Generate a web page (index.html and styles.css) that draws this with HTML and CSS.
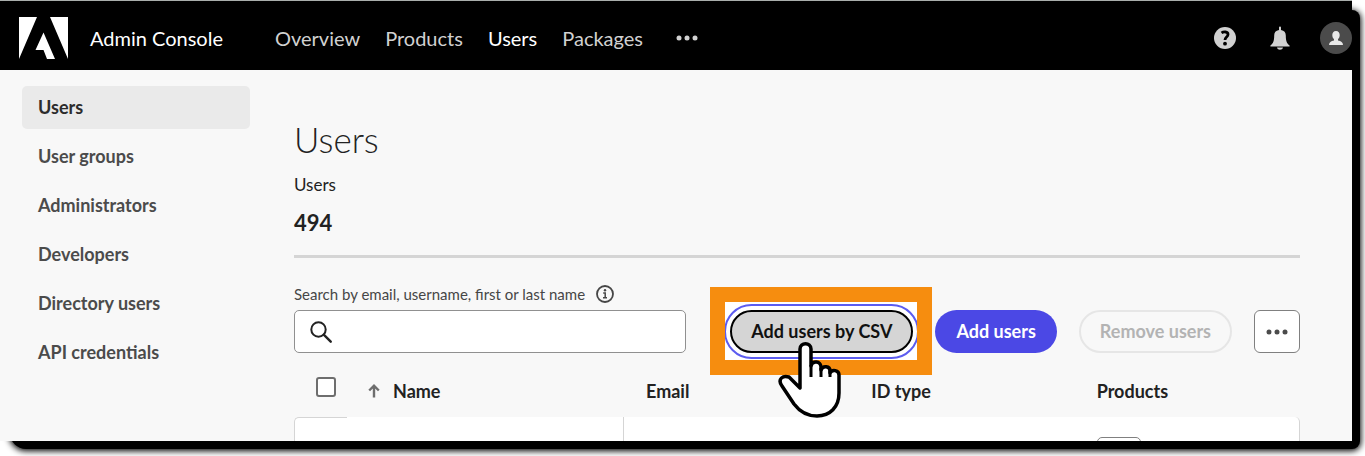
FILE: index.html
```html
<!DOCTYPE html>
<html lang="en">
  <head>
    <meta charset="UTF-8" />
    <meta name="viewport" content="width=device-width, initial-scale=1.0" />
    <title>Admin Console</title>
    <link rel="stylesheet" href="styles.css">
  </head>
  <body>
    <div class="window">
      <div class="app">
        <header class="topbar">
          <svg class="logo" viewBox="0 0 49 42" aria-hidden="true">
            <path d="M0 0h18L0 42zM31 0h18v42zM24.500 15.500L36 42h-8l-3.500-9h-8z" fill="#fff"/>
          </svg>
          <span class="brand">Admin Console</span>
          <nav class="mainnav">
            <a href="#">Overview</a>
            <a href="#">Products</a>
            <a href="#" class="current">Users</a>
            <a href="#">Packages</a>
            <button class="nav-more" aria-label="More">
              <svg width="22" height="6" viewBox="0 0 22 6"><g fill="currentColor"><circle cx="3" cy="3" r="2.500"/><circle cx="11" cy="3" r="2.500"/><circle cx="19" cy="3" r="2.500"/></g></svg>
            </button>
          </nav>
          <div class="tools">
            <button aria-label="Help">
              <svg width="22" height="22" viewBox="0 0 22 22">
                <circle cx="11" cy="11" r="11" fill="#d1d1d1"/>
                <path d="M7.500 5.900C9.500 4.600 14 4.300 14 7.500c0 2.500-3 2.700-3 5.500" fill="none" stroke="#000" stroke-width="2.800"/>
                <circle cx="11" cy="16.700" r="1.900" fill="#000"/>
              </svg>
            </button>
            <button aria-label="Notifications">
              <svg width="20" height="24" viewBox="0 0 20 24">
                <path d="M9 1.500a1 1 0 0 1 2 0V4c3.300.4 4.800 2.700 4.800 5.500 0 5.500 1 8 3.800 10v1H.400v-1c2.800-2 3.800-4.500 3.800-10C4.200 6.700 5.700 4.400 9 4zM7 21.500h6c-.5 3-5.500 3-6 0z" fill="#d1d1d1"/>
              </svg>
            </button>
            <button aria-label="Account">
              <svg width="32" height="32" viewBox="0 0 32 32">
                <circle cx="16" cy="16" r="16" fill="#4b4b4b"/>
                <path d="M16 9c2.500 0 3.700 1.700 3.700 4 0 1.800-.6 3.200-1.700 4.200v1.200c3 .6 5 1.600 5 4.600H9c0-3 2-4 5-4.600v-1.200c-1.100-1-1.700-2.400-1.700-4.200 0-2.300 1.200-4 3.700-4z" fill="#e8e8e8"/>
              </svg>
            </button>
          </div>
        </header>

        <div class="layout">
          <nav class="sidebar">
            <a href="#" class="active">Users</a>
            <a href="#">User groups</a>
            <a href="#">Administrators</a>
            <a href="#">Developers</a>
            <a href="#">Directory users</a>
            <a href="#">API credentials</a>
          </nav>

          <main class="content">
            <h1>Users</h1>
            <div class="stat">
              <div class="stat-label">Users</div>
              <div class="stat-value">494</div>
            </div>

            <div class="toolbar">
              <div class="search">
                <div class="search-label">
                  <label for="search">Search by email, username, first or last name</label>
                  <svg width="18" height="18" viewBox="0 0 18 18">
                    <circle cx="9" cy="9" r="8" fill="none" stroke="#464646" stroke-width="1.800"/>
                    <circle cx="9" cy="5.300" r="1.200" fill="#464646"/>
                    <path d="M7.200 8h2v4.500M7 12.700h4" fill="none" stroke="#464646" stroke-width="1.500"/>
                  </svg>
                </div>
                <div class="search-box">
                  <svg width="22" height="22" viewBox="0 0 22 22"><g fill="none" stroke="#222" stroke-width="2"><circle cx="8.500" cy="8.500" r="7.200"/><path d="M13.700 13.700l7 7" stroke-width="2.400" stroke-linecap="round"/></g></svg>
                  <input type="text" id="search">
                </div>
              </div>
              <div class="actions">
                <div class="callout">
                  <button class="btn btn-csv">Add users by CSV</button>
                  <span class="frame"></span>
                  <svg class="hand" width="64" height="77" viewBox="0 0 64 77">
                    <path d="M22 47V8c0-7 11-7 11 0v17c1-6 10-5 10 1v3c2-5 9-4 9 1v2c2-4 9-3 9 2v18c0 14-9 23-22 23-10 0-17-4-23-12L4 45c-5-7 1-11 7-9z" fill="#fff" stroke="#000" stroke-width="3.500" stroke-linejoin="round"/>
                    <path d="M33 24v12M43 27v9M52 30v6" stroke="#000" stroke-width="3"/>
                  </svg>
                </div>
                <button class="btn btn-primary">Add users</button>
                <button class="btn btn-disabled" disabled>Remove users</button>
                <button class="btn-more" aria-label="More actions">
                  <svg width="22" height="6" viewBox="0 0 22 6"><g fill="currentColor"><circle cx="3" cy="3" r="2.500"/><circle cx="11" cy="3" r="2.500"/><circle cx="19" cy="3" r="2.500"/></g></svg>
                </button>
              </div>
            </div>

            <table class="users">
              <thead>
                <tr>
                  <th class="col-check"><input type="checkbox" aria-label="Select all"></th>
                  <th class="col-name">
                    <svg width="12" height="14" viewBox="0 0 12 14"><path d="M6 13.500V2M1.200 6.500L6 1.700l4.800 4.800" fill="none" stroke="#6e6e6e" stroke-width="2.400"/></svg>Name
                  </th>
                  <th>Email</th>
                  <th>ID type</th>
                  <th>Products</th>
                </tr>
              </thead>
              <tbody>
                <tr>
                  <td class="cell-check"></td>
                  <td class="cell-name"></td>
                  <td></td>
                  <td></td>
                  <td class="cell-products"><span class="product"></span></td>
                </tr>
              </tbody>
            </table>
          </main>
        </div>
      </div>
    </div>
  </body>
</html>
```
FILE: styles.css
```css
* {
  margin: 0;
  padding: 0;
  box-sizing: border-box;
}

body {
  height: 100vh;
  padding: 0 13px 15px 0;
  overflow: hidden;
  background-color: #fff;
  color: #222;
  font-family: Lato, "Open Sans", sans-serif;
  font-size: 18px;
}

button {
  font-family: inherit;
  font-size: inherit;
  cursor: pointer;
}

a {
  color: inherit;
  text-decoration: none;
}

svg {
  display: block;
  flex-shrink: 0;
}

/* window and its drop shadow */
.window {
  position: relative;
  height: 100%;
}

.window::before {
  content: "";
  position: absolute;
  inset: 10px -8px -8px 10px;
  border-radius: 8px 8px 8px 16px;
  background-color: #000;
  box-shadow: 0 1px 6px 1px #000;
}

.app {
  position: relative;
  height: 100%;
  overflow: hidden;
  background-color: #f8f8f8;
}

/* top bar */
.topbar {
  display: flex;
  align-items: center;
  height: 70px;
  padding-left: 19px;
  padding-top: 5px;
  border-top: 1px solid #a9aeac;
  background-color: #000;
  color: #d1d1d1;
}

.logo {
  width: 49px;
  height: 42px;
}

.brand {
  margin-left: 22px;
  color: #fff;
  font-size: 20px;
}

.mainnav {
  display: flex;
  align-items: center;
  gap: 25px;
  margin-left: 52px;
  font-size: 20px;
}

.mainnav .current {
  color: #fff;
}

.nav-more,
.tools button {
  border: 0;
  background: none;
  color: inherit;
}

.nav-more {
  padding: 8px;
}

.tools {
  display: flex;
  align-items: center;
  gap: 30px;
  margin-left: auto;
}

.tools button:first-child {
  margin-right: 4px;
}

/* page body */
.layout {
  display: flex;
  align-items: flex-start;
  gap: 44px;
  padding: 16px 52px 0 22px;
}

.sidebar {
  display: flex;
  flex: 0 0 228px;
  flex-direction: column;
  gap: 6px;
  color: #4b4b4b;
  font-weight: bold;
}

.sidebar a {
  padding: 0 16px;
  border-radius: 5px;
  line-height: 43px;
}

.sidebar .active {
  background-color: #eaeaea;
  color: #2c2c2c;
}

.content {
  flex: 1;
  min-width: 0;
  padding-top: 30px;
}

h1 {
  font-size: 35px;
  font-weight: 300;
  line-height: 46px;
}

.stat {
  padding: 11px 0 17px;
  border-bottom: 3px solid #d5d5d5;
}

.stat-label {
  font-size: 17px;
  line-height: 24px;
}

.stat-value {
  margin-top: 11px;
  font-size: 22px;
  font-weight: bold;
  line-height: 30px;
}

/* search and buttons */
.toolbar {
  display: flex;
  align-items: flex-end;
  justify-content: space-between;
  padding-top: 24px;
}

.search {
  flex: 0 1 392px;
}

.search-label {
  display: flex;
  align-items: center;
  gap: 11px;
  margin-bottom: 4px;
  color: #464646;
  font-size: 15px;
  line-height: 24px;
}

.search-box {
  display: flex;
  align-items: center;
  height: 43px;
  padding-left: 15px;
  border: 1px solid #909090;
  border-radius: 5px;
  background-color: #fff;
}

.search-box input {
  flex: 1;
  min-width: 0;
  height: 100%;
  padding: 0 10px;
  border: 0;
  outline: 0;
  background: none;
  font: inherit;
}

.actions {
  display: flex;
  align-items: center;
  gap: 22px;
}

.btn {
  height: 43px;
  padding: 0 19px 2px;
  border: 2px solid transparent;
  border-radius: 22px;
  font-weight: bold;
  white-space: nowrap;
}

.btn-csv {
  position: relative;
  border-color: #000;
  background-color: #d5d5d5;
  color: #111;
  outline: 2px solid #5c5cf0;
  outline-offset: 4px;
}

.btn-primary {
  background-color: #4b48e5;
  color: #fff;
}

.btn-disabled {
  border-color: #e6e6e6;
  background: none;
  color: #b3b3b3;
}

.btn-more {
  display: flex;
  align-items: center;
  justify-content: center;
  width: 46px;
  height: 43px;
  border: 1px solid #808080;
  border-radius: 6px;
  background-color: #fff;
  color: #4b4b4b;
}

/* highlighted button with its frame and pointer */
.callout {
  position: relative;
}

.callout::before {
  content: "";
  position: absolute;
  inset: -8px -4px -7px -6px;
  background-color: #fff;
}

.frame {
  position: absolute;
  inset: -23px -19px -22px -20px;
  border: 15px solid #f68d0f;
  pointer-events: none;
}

.hand {
  position: absolute;
  top: 31px;
  left: 48px;
  pointer-events: none;
}

/* users table */
.users {
  width: 100%;
  border-spacing: 0;
  table-layout: fixed;
}

.users th {
  height: 64px;
  padding: 12px 0 0 22px;
  text-align: left;
  font-weight: bold;
}

.users .col-check {
  width: 53px;
  padding-top: 4px;
}

.users .col-name {
  width: 277px;
  padding-left: 21px;
}

.col-name svg {
  display: inline-block;
  margin-right: 13px;
}

.col-check input {
  display: block;
  appearance: none;
  width: 20px;
  height: 20px;
  border: 2px solid #6e6e6e;
  border-radius: 3px;
  background-color: #fff;
}

.users td {
  height: 70px;
  background-color: #fff;
  vertical-align: top;
}

.users .cell-check {
  border-top: 1px solid #d5d5d5;
  border-left: 1px solid #d5d5d5;
  border-top-left-radius: 5px;
}

.users .cell-name {
  border-right: 1px solid #d5d5d5;
}

.users .cell-products {
  padding: 20px 22px 0;
  border-right: 1px solid #d5d5d5;
  border-top-right-radius: 5px;
}

.product {
  display: block;
  width: 44px;
  height: 44px;
  border: 1px solid #808080;
  border-radius: 5px;
}
```
